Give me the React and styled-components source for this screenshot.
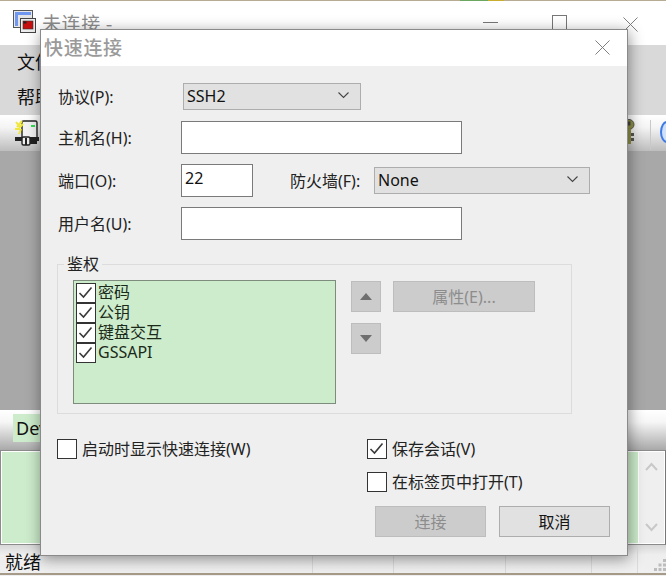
import React from "react";
import styled, { createGlobalStyle } from "styled-components";

const GlobalStyle = createGlobalStyle`
  html, body {
    margin: 0;
    padding: 0;
    overflow: hidden;
    background: #efefef;
  }
  * {
    box-sizing: border-box;
  }
`;

const FONT = `"Noto Sans", "Noto Sans CJK SC", sans-serif`;
const CJK = `"Noto Sans CJK SC", "Noto Sans", sans-serif`;

const Page = styled.div`
  position: relative;
  width: 666px;
  height: 576px;
  overflow: hidden;
  font-family: ${FONT};
  color: #151515;
`;

/* back window */
const Wallpaper = styled.div`
  display: flex;
  height: 1px;
  background: #b8ab94;
`;

const WallpaperBit = styled.div`
  width: ${(p) => p.$w}px;
  background: ${(p) => p.$c};
`;

const TitleBar = styled.div`
  display: flex;
  align-items: flex-start;
  height: 44px;
  padding: 9px 0 0 13px;
  background: #fff;
`;

const AppTitle = styled.div`
  margin: 0 0 0 5px;
  font-family: ${CJK};
  font-size: 19px;
  line-height: 26px;
  color: #8c8c8c;
  letter-spacing: 0.6px;
`;

const WindowButtons = styled.div`
  margin-left: auto;
  display: flex;
  gap: 54px;
  padding: 5px 28px 0 0;
`;

const CloseSlot = styled.div`
  margin-left: 2px;
`;

const MenuArea = styled.div`
  height: 70px;
  background: #d9d9d9;
  padding-left: 17px;
`;

const MenuRow = styled.div`
  height: 35px;
  font-family: ${CJK};
  font-size: 18px;
  line-height: 33px;
  color: #111;
`;

const Toolbar = styled.div`
  display: flex;
  align-items: flex-start;
  height: 36px;
  padding: 4px 0 0 14px;
  background: linear-gradient(#ffffff 0%, #f4f4f4 35%, #bdbdbd 100%);
`;

const ToolbarRight = styled.div`
  margin-left: auto;
  display: flex;
  align-items: flex-start;
`;

const ToolbarSep = styled.div`
  width: 1px;
  height: 30px;
  margin: 1px 9px 0 15px;
  background: #c8c8c8;
`;

const GreyArea = styled.div`
  height: 259px;
  background: #a8a8a8;
`;

const TabStrip = styled.div`
  height: 40px;
  padding: 4px 0 0 13px;
  background: linear-gradient(#ffffff 0%, #f6f6f6 30%, #a9a9a9 100%);
`;

const Tab = styled.div`
  width: 40px;
  height: 28px;
  padding-left: 3px;
  background: #cdeccb;
  font-size: 18px;
  line-height: 28px;
  color: #111;
`;

const SessionArea = styled.div`
  display: flex;
  height: 95px;
  border: 1px solid #8b8b8b;
  border-right-color: #777;
  background: #fff;
  padding: 1px;
`;

const Terminal = styled.div`
  width: 636px;
  background: #cdeccb;
`;

const ScrollTrack = styled.div`
  flex: 1;
  margin-left: 1px;
  display: flex;
  flex-direction: column;
  align-items: center;
  justify-content: space-between;
  padding: 10px 0 11px;
  background: #efefef;
`;

const StatusBar = styled.div`
  display: flex;
  height: 30px;
  background: linear-gradient(#d8d8d8 0%, #eeeeee 35%, #f0f0f0 100%);
  border-bottom: 2px solid #a69b88;
`;

const StatusCell = styled.div`
  width: ${(p) => p.$w}px;
  border-right: 1px solid #dcdcdc;
  font-family: ${CJK};
  font-size: 18px;
  line-height: 32px;
  padding-left: 5px;
  color: #111;
`;

const Grip = styled.div`
  flex: 1;
  display: flex;
  justify-content: flex-end;
  align-items: flex-end;
  padding: 0 0 2px;
`;

/* dialog on top */
const Dialog = styled.div`
  position: absolute;
  left: 40px;
  top: 29px;
  width: 588px;
  height: 527px;
  border: 1px solid #8a8a8a;
  background: #efefef;
  box-shadow: 1px 3px 14px rgba(0, 0, 0, 0.42);
`;

const DialogTitle = styled.div`
  display: flex;
  justify-content: space-between;
  height: 36px;
  padding: 10px 17px 0 3px;
  background: #fff;
  font-family: ${CJK};
  font-size: 19px;
  font-weight: 500;
  line-height: 13px;
  letter-spacing: 0.7px;
  color: #9a9a9a;
`;

const DialogBody = styled.div`
  padding: 17px 17px 0 16px;
`;

const FormRow = styled.div`
  display: flex;
  align-items: center;
  height: ${(p) => p.$h}px;
  margin-bottom: ${(p) => p.$mb}px;
`;

const Label = styled.div`
  width: ${(p) => p.$w}px;
  padding-left: ${(p) => p.$pl || 0}px;
  padding-bottom: 2px;
  font-size: 16px;
  color: #222;
  white-space: nowrap;
`;

const Select = styled.div`
  display: flex;
  align-items: center;
  justify-content: space-between;
  width: ${(p) => p.$w}px;
  height: 27px;
  padding: 0 11px 2px 3px;
  border: 1px solid #adadad;
  background: #e1e1e1;
  font-size: 16px;
  color: #111;
`;

const TextInput = styled.div`
  width: ${(p) => p.$w}px;
  height: 33px;
  padding: 0 3px;
  border: 1px solid #7a7a7a;
  background: #fff;
  font-size: 16px;
  line-height: 26px;
  color: #111;
`;

const Group = styled.div`
  position: relative;
  width: 515px;
  height: 150px;
  margin-bottom: 25px;
  padding: 15px 0 0 15px;
  border: 1px solid #dcdcdc;
  display: flex;
`;

const GroupTitle = styled.div`
  position: absolute;
  left: 6px;
  top: -11px;
  padding: 0 3px;
  background: #efefef;
  font-size: 16px;
  line-height: 20px;
  color: #222;
`;

const AuthList = styled.div`
  width: 263px;
  height: 124px;
  padding: 2px 2px;
  border: 1px solid #7d8c7d;
  background: #cdeccb;
`;

const AuthRow = styled.div`
  display: flex;
  align-items: flex-start;
  gap: 2px;
  height: 20px;
  font-size: 16px;
  line-height: 19px;
  color: #1a2a1a;
`;

const Box = styled.div`
  flex: none;
  width: 20px;
  height: 20px;
  border: 1.5px solid #333;
  background: #fff;
`;

const ArrowColumn = styled.div`
  display: flex;
  flex-direction: column;
  gap: 11px;
  margin: 1px 12px 0 15px;
`;

const ArrowButton = styled.div`
  display: flex;
  align-items: center;
  justify-content: center;
  width: 30px;
  height: 31px;
  border: 1px solid #bdbdbd;
  background: #cccccc;
`;

const GreyButton = styled.div`
  display: flex;
  align-items: center;
  justify-content: center;
  width: ${(p) => p.$w}px;
  height: 31px;
  padding-bottom: 2px;
  border: 1px solid ${(p) => (p.$disabled ? "#bdbdbd" : "#adadad")};
  background: ${(p) => (p.$disabled ? "#cccccc" : "#e1e1e1")};
  color: ${(p) => (p.$disabled ? "#8c8c8c" : "#151515")};
  font-size: 16px;
`;

const PropsButton = styled(GreyButton)`
  margin-top: 1px;
`;

const OptionsGrid = styled.div`
  display: grid;
  grid-template-columns: 310px 1fr;
  row-gap: 13px;
`;

const Option = styled.div`
  display: flex;
  align-items: flex-start;
  gap: 5px;
  height: 20px;
  font-size: 16px;
  line-height: 21px;
  color: #222;
  white-space: nowrap;
`;

const ButtonRow = styled.div`
  display: flex;
  justify-content: flex-end;
  gap: 13px;
  margin-top: 14px;
`;

const Chevron = () => (
  <svg width="11" height="7" viewBox="0 0 11 7">
    <polyline points="0.5,0.5 5.5,5.5 10.5,0.5" fill="none" stroke="#444" strokeWidth="1.1" />
  </svg>
);

const CheckBox = ({ checked }) => (
  <Box>
    {checked && (
      <svg width="17" height="17" viewBox="0 0 17 17" style={{ display: "block" }}>
        <polyline points="2.5,9 6.5,13 14.5,3.5" fill="none" stroke="#3a3a3a" strokeWidth="1.6" />
      </svg>
    )}
  </Box>
);

const Cross = ({ size, color }) => (
  <svg width={size} height={size} viewBox="0 0 16 16">
    <path d="M0.5 0.5 L15.5 15.5 M15.5 0.5 L0.5 15.5" stroke={color} strokeWidth="1" fill="none" />
  </svg>
);

const AppIcon = () => (
  <svg width="24" height="24" viewBox="0 0 24 24">
    <rect x="0.5" y="0.5" width="19" height="17" fill="#e8e8e8" stroke="#555" />
    <rect x="2" y="2" width="16" height="14" fill="#6f97f0" />
    <rect x="5" y="5" width="13" height="11" fill="#e4e4e4" />
    <rect x="7.5" y="8.5" width="15" height="14" fill="#ededed" stroke="#444" />
    <rect x="10" y="11" width="10" height="8" fill="#c80f0f" stroke="#333" strokeWidth="0.6" />
    <rect x="10.5" y="11.5" width="3" height="2" fill="#222" />
  </svg>
);

const ConnectIcon = () => (
  <svg width="26" height="28" viewBox="0 0 26 28">
    <rect x="8" y="2" width="15" height="20" rx="1.5" fill="#f2f2f2" stroke="#222" strokeWidth="1.4" />
    <rect x="17" y="6" width="4" height="2" fill="#33dd55" />
    <path d="M8 2 L3 8 M1 10 L6 10 M9 5 L5 9 M2 3 L6 8 M5 15 L7 10" stroke="#f1e73a" strokeWidth="2" />
    <rect x="1" y="18" width="24" height="4" fill="#222" />
    <rect x="8" y="18" width="8" height="8" rx="1.5" fill="#eee" stroke="#222" strokeWidth="1.4" />
    <rect x="11" y="19" width="2" height="7" fill="#222" />
    <rect x="16" y="20" width="7" height="5" fill="#222" />
  </svg>
);

const KeyIcon = () => (
  <svg width="12" height="26" viewBox="0 0 12 26">
    <circle cx="6" cy="5.5" r="5" fill="#8e9044" stroke="#555" />
    <rect x="4.4" y="2.5" width="3" height="4" fill="#444" />
    <rect x="4" y="10" width="4" height="15" fill="#8e9044" />
    <path d="M8 14 h3 v3 h-3 M8 19 h3 v3 h-3" fill="#555" />
  </svg>
);

const GlobeEdge = () => (
  <svg width="6" height="26" viewBox="0 0 6 26">
    <ellipse cx="7" cy="13" rx="6" ry="10" fill="#cfe0fb" stroke="#3f7be8" strokeWidth="2" />
  </svg>
);

const ScrollChevron = ({ up }) => (
  <svg width="13" height="9" viewBox="0 0 13 9">
    <polyline
      points={up ? "1,8 6.5,2 12,8" : "1,1 6.5,7 12,1"}
      fill="none"
      stroke="#c8c8c8"
      strokeWidth="2"
    />
  </svg>
);

const SmallArrow = ({ up }) => (
  <svg width="12" height="7" viewBox="0 0 12 7">
    <polygon points={up ? "6,0 12,7 0,7" : "0,0 12,0 6,7"} fill="#6f6f6f" />
  </svg>
);

const GripDots = () => (
  <svg width="12" height="12" viewBox="0 0 12 12">
    <g fill="#bdbdbd">
      <rect x="9" y="0" width="3" height="3" />
      <rect x="4.5" y="4.5" width="3" height="3" />
      <rect x="9" y="4.5" width="3" height="3" />
      <rect x="0" y="9" width="3" height="3" />
      <rect x="4.5" y="9" width="3" height="3" />
      <rect x="9" y="9" width="3" height="3" />
    </g>
  </svg>
);

const authItems = ["密码", "公钥", "键盘交互", "GSSAPI"];

export default function App() {
  return (
    <Page>
      <GlobalStyle />
      <Wallpaper>
        <WallpaperBit $w={460} $c="#b8ab94" />
        <WallpaperBit $w={28} $c="#6aa860" />
        <WallpaperBit $w={16} $c="#c9ae2e" />
      </Wallpaper>
      <TitleBar>
        <AppIcon />
        <AppTitle>未连接 -</AppTitle>
        <WindowButtons>
          <svg width="15" height="15" viewBox="0 0 15 15">
            <line x1="0" y1="7.5" x2="15" y2="7.5" stroke="#777" />
          </svg>
          <svg width="15" height="15" viewBox="0 0 15 15">
            <rect x="0.5" y="0.5" width="14" height="14" fill="none" stroke="#777" />
          </svg>
          <CloseSlot>
            <Cross size={15} color="#777" />
          </CloseSlot>
        </WindowButtons>
      </TitleBar>
      <MenuArea>
        <MenuRow>文件</MenuRow>
        <MenuRow>帮助</MenuRow>
      </MenuArea>
      <Toolbar>
        <ConnectIcon />
        <ToolbarRight>
          <KeyIcon />
          <ToolbarSep />
          <GlobeEdge />
        </ToolbarRight>
      </Toolbar>
      <GreyArea />
      <TabStrip>
        <Tab>Dev</Tab>
      </TabStrip>
      <SessionArea>
        <Terminal />
        <ScrollTrack>
          <ScrollChevron up />
          <ScrollChevron />
        </ScrollTrack>
      </SessionArea>
      <StatusBar>
        <StatusCell $w={313}>就绪</StatusCell>
        <StatusCell $w={81} />
        <StatusCell $w={112} />
        <StatusCell $w={86} />
        <StatusCell $w={46} />
        <Grip>
          <GripDots />
        </Grip>
      </StatusBar>

      <Dialog>
        <DialogTitle>
          快速连接
          <Cross size={15} color="#777" />
        </DialogTitle>
        <DialogBody>
          <FormRow $h={27} $mb={11}>
            <Label $w={126} $pl={1}>协议(P):</Label>
            <Select $w={178}>
              SSH2
              <Chevron />
            </Select>
          </FormRow>
          <FormRow $h={33} $mb={10}>
            <Label $w={124} $pl={1}>主机名(H):</Label>
            <TextInput $w={281} />
          </FormRow>
          <FormRow $h={33} $mb={10}>
            <Label $w={124} $pl={1}>端口(O):</Label>
            <TextInput $w={72}>22</TextInput>
            <Label $w={121} $pl={37}>防火墙(F):</Label>
            <Select $w={216}>
              None
              <Chevron />
            </Select>
          </FormRow>
          <FormRow $h={33} $mb={24}>
            <Label $w={124} $pl={1}>用户名(U):</Label>
            <TextInput $w={281} />
          </FormRow>
          <Group>
            <GroupTitle>鉴权</GroupTitle>
            <AuthList>
              {authItems.map((item) => (
                <AuthRow key={item}>
                  <CheckBox checked />
                  {item}
                </AuthRow>
              ))}
            </AuthList>
            <ArrowColumn>
              <ArrowButton>
                <SmallArrow up />
              </ArrowButton>
              <ArrowButton>
                <SmallArrow />
              </ArrowButton>
            </ArrowColumn>
            <PropsButton $w={142} $disabled>
              属性(E)...
            </PropsButton>
          </Group>
          <OptionsGrid>
            <Option>
              <CheckBox />
              启动时显示快速连接(W)
            </Option>
            <Option>
              <CheckBox checked />
              保存会话(V)
            </Option>
            <div />
            <Option>
              <CheckBox />
              在标签页中打开(T)
            </Option>
          </OptionsGrid>
          <ButtonRow>
            <GreyButton $w={111} $disabled>连接</GreyButton>
            <GreyButton $w={111}>取消</GreyButton>
          </ButtonRow>
        </DialogBody>
      </Dialog>
    </Page>
  );
}
